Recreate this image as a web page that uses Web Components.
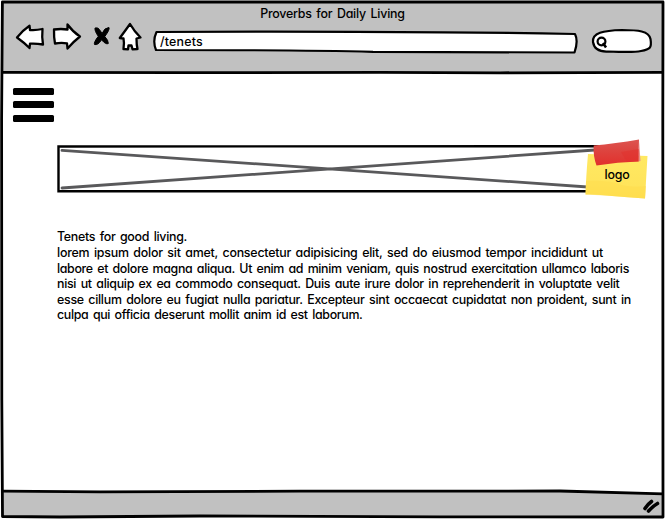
<!DOCTYPE html>
<html lang="en">
<head>
<meta charset="utf-8">
<title>Proverbs for Daily Living</title>
<style>
html,body{margin:0;width:665px;height:519px;overflow:hidden;background:#fff}
body{font:450 12.4px/15.6px Inter,"Open Sans",sans-serif;font-feature-settings:"cv11" 1;word-spacing:1.5px;color:#000}
</style>
</head>
<body>
<browser-window>
  <browser-toolbar slot="toolbar" heading="Proverbs for Daily Living" address="/tenets"></browser-toolbar>
  <menu-button></menu-button>
  <banner-image><sticky-note slot="note">logo</sticky-note></banner-image>
  <text-block>
    <fit-text width="130">Tenets for good living.</fit-text>
    <fit-text width="546">lorem ipsum dolor sit amet, consectetur adipisicing elit, sed do eiusmod tempor incididunt ut</fit-text>
    <fit-text width="572">labore et dolore magna aliqua. Ut enim ad minim veniam, quis nostrud exercitation ullamco laboris</fit-text>
    <fit-text width="562.5">nisi ut aliquip ex ea commodo consequat. Duis aute irure dolor in reprehenderit in voluptate velit</fit-text>
    <fit-text width="574">esse cillum dolore eu fugiat nulla pariatur. Excepteur sint occaecat cupidatat non proident, sunt in</fit-text>
    <fit-text width="305.5">culpa qui officia deserunt mollit anim id est laborum.</fit-text>
  </text-block>
</browser-window>
<script>
const define = (name, html, setup) => customElements.define(name, class extends HTMLElement {
  constructor() {
    super();
    this.attachShadow({mode: 'open'}).innerHTML = html;
  }
  connectedCallback() { if (setup) setup(this, this.shadowRoot); }
});

// One line of text whose letter spacing is tuned to fill a given width.
define('fit-text', `<style>:host{display:block;white-space:nowrap}span{display:inline-block}</style><span><slot></slot></span>`,
  (el, root) => {
    const span = root.querySelector('span');
    const want = +el.getAttribute('width');
    const n = el.textContent.trim().length;
    span.style.letterSpacing = '0';
    span.style.letterSpacing = (want - span.getBoundingClientRect().width) / n + 'px';
  });

define('browser-window', `<style>
:host{display:flex;flex-direction:column;position:relative;width:665px;height:519px}
.frame{position:absolute;inset:0;pointer-events:none}
main{flex:1;display:flex;flex-direction:column;align-items:flex-start;padding:14px 0 0 12.500px}
</style>
<svg class="frame" width="665" height="519" fill="none" stroke="#000" stroke-width="2.8" stroke-linejoin="round">
<path d="M3 2L663 2L663 73L3 73Z" fill="#c1c1c1" stroke="none"/>
<path d="M3 491.5L560 491L663 494V517H3Z" fill="#c1c1c1" stroke="none"/>
<path d="M2.4 2L663 2L662.8 120L663 517L440 516.8L200 516L60 517L2.5 516.5L1.8 400L1.6 120Z"/>
<path d="M3 72.3L180 72.7L380 72.3L500 72.8L663 72.3"/>
<path d="M3 491.2L100 491.8L300 491.2L560 491L663 493.8"/>
<path d="M645 508.5Q648 504 651.5 501.5M648.5 511Q653 506 657.5 503.5" stroke-width="3.6" stroke-linecap="round"/>
</svg>
<slot name="toolbar"></slot><main><slot></slot></main>`);

define('nav-icon', `<style>:host{display:block}svg{display:block;overflow:visible}</style><svg fill="#fff" stroke="#000" stroke-width="2.3" stroke-linejoin="round"></svg>`,
  (el, root) => {
    const shapes = {
      back: [28, 26, '<path d="M1 12.5Q7 5 13.5 .7L14 5Q20 5.500 26.500 4Q25.700 12 27 19.500Q20 18.300 14 18.700L13.500 23Q8 17.500 1 12.500Z"/>'],
      forward: [28, 26, '<path d="M1 5.500Q8 4.500 14.500 5.500L14.500 .5Q20 8 27 12.500Q20 18 14.500 24.500L14 19.300Q8 18.300 2 19.500Q.8 13.500 1 5.500Z"/>'],
      stop: [17, 21, '<path d="M2 3Q5 1.500 7.500 6L9 8.500Q11.500 2.500 16 2.500Q17 4.500 11.800 11.500Q15.500 15.500 15.300 18.500Q13 20 8.500 14.800Q5 20.500 1.500 19.500Q.5 17.500 5.300 11.300Q1.500 6 2 3Z" fill="#000" stroke-width="1"/>'],
      home: [22, 26, '<path d="M11 0Q15 7 21.500 13.500L17.500 14.500Q17.500 21 18.500 25L13.500 25.300L12.500 21.500L9.500 21.500L9 25.300L4.500 25Q5.500 19 4.500 14.500L.8 14Q6 7 11 0Z"/>']
    };
    const [w, h, path] = shapes[el.getAttribute('name')];
    const svg = root.querySelector('svg');
    svg.setAttribute('width', w);
    svg.setAttribute('height', h);
    svg.innerHTML = path;
  });

define('address-field', `<style>
:host{display:grid;width:425px;height:24px}
svg,fit-text{grid-area:1/1}
fit-text{padding:4px 0 0 7px;z-index:1}
</style>
<svg width="425" height="24" fill="#fff" stroke="#000" stroke-width="2.200" stroke-linejoin="round"><path d="M3.500 2Q140 1.300 290 2.300Q360 2.700 422 4Q425.500 11 421.500 22.500Q300 22 220 21.800Q150 20 3 20Q-.7 11 3.500 2Z"/></svg>
<fit-text width="43"></fit-text>`,
  (el, root) => { const t = root.querySelector('fit-text'); t.textContent = el.getAttribute('value'); t.replaceWith(t); });

define('search-field', `<style>:host{display:block}svg{display:block}</style>
<svg width="62" height="26" fill="#fff" stroke="#000" stroke-width="2.200"><path d="M2 14C1 5 12 2.500 31 2C47 2 58 3 59.500 11C61 20 59 21.500 50 23C40 25 29 23.500 17 23.500C8 24 3 20 2 14Z"/><circle cx="10.500" cy="13.500" r="3.900" stroke-width="2.200"/><path d="M12 15L15 19.500" stroke-width="2.500"/></svg>`);

define('browser-toolbar', `<style>
:host{display:flex;flex-direction:column;height:74px;position:relative}
.title{display:flex;justify-content:center;padding-top:6px;height:17.500px;line-height:16px}
.row{display:flex;align-items:flex-start;padding-left:15.500px}
nav{display:flex;align-items:flex-start}
.back{margin-top:1px}.fwd{margin:.5px 0 0 9.500px}.stop{margin:1px 0 0 12px}.home{margin-left:8.500px}
address-field{margin:6px 0 0 12.500px}search-field{margin:4.500px 0 0 13px}
</style>
<div class="title"><fit-text width="144.5"></fit-text></div>
<div class="row"><nav><nav-icon class="back" name="back"></nav-icon><nav-icon class="fwd" name="forward"></nav-icon><nav-icon class="stop" name="stop"></nav-icon><nav-icon class="home" name="home"></nav-icon></nav>
<address-field></address-field><search-field></search-field></div>`,
  (el, root) => {
    const t = root.querySelector('fit-text');
    t.textContent = el.getAttribute('heading');
    t.replaceWith(t);
    const a = root.querySelector('address-field');
    a.setAttribute('value', el.getAttribute('address'));
    a.replaceWith(a);
  });

define('menu-button', `<style>:host{display:flex;flex-direction:column;gap:6.900px;width:41px}i{display:block;height:6.600px;background:#000;border-radius:1.500px}</style><i></i><i></i><i></i>`);

define('banner-image', `<style>
:host{display:block;position:relative;width:592px;height:62px;margin:17.400px 0 0 43.500px}
svg{display:block}
::slotted(*){position:absolute;left:528.500px;top:0}
</style>
<svg width="592" height="62" fill="none"><path d="M6 11.300L546 49M6 49L546 10.500" stroke="#59595b" stroke-width="2.800" stroke-linecap="round"/><path d="M2.500 7.500L560 7.200M2.500 52.200H560M2.500 7.500V52.200" stroke="#000" stroke-width="2.400" stroke-linecap="square"/></svg>
<slot name="note"></slot>`);

define('sticky-note', `<style>
:host{display:grid;width:64px;height:62px}
svg,span{grid-area:1/1}span{padding:28.500px 0 0 20px;z-index:1}
</style>
<svg width="64" height="62">
<defs><linearGradient id="y" x2="0" y2="1"><stop stop-color="#ffe963"/><stop offset=".7" stop-color="#ffe45b"/><stop offset="1" stop-color="#ffe050"/></linearGradient>
<linearGradient id="r" x2="0" y2="1"><stop stop-color="#dc5551"/><stop offset=".4" stop-color="#dd4540"/><stop offset="1" stop-color="#e2302c"/></linearGradient></defs>
<path d="M3 15L62.500 17L61 42Q60.500 53 60 59.500Q42 58 27 57Q12 55 .5 55.500Q1 38 3 15Z" fill="url(#y)"/>
<path d="M1 42Q25 41 36 46Q49 49 61 47L60 59.500Q42 58 27 57L.5 55.500Z" fill="#ffdc4c" opacity=".5"/>
<path d="M8.700 6.500Q30 4.500 54 .4L53.500 22.500Q33 23 11.500 26.500Q8 17 8.700 6.500Z" fill="url(#r)"/>
<path d="M54 1L55.500 22L53.500 22.500Z" fill="#e88d87"/><path d="M36 13L54 10V22.500L42 23Z" fill="#e1302c" opacity=".5"/>
</svg><span><fit-text width="25"></fit-text></span>`,
  (el, root) => { const t = root.querySelector('fit-text'); t.textContent = el.textContent; t.replaceWith(t); });

define('text-block', `<style>:host{display:block;margin:28.500px 0 0 44.500px}</style><slot></slot>`);
</script>
</body>
</html>
